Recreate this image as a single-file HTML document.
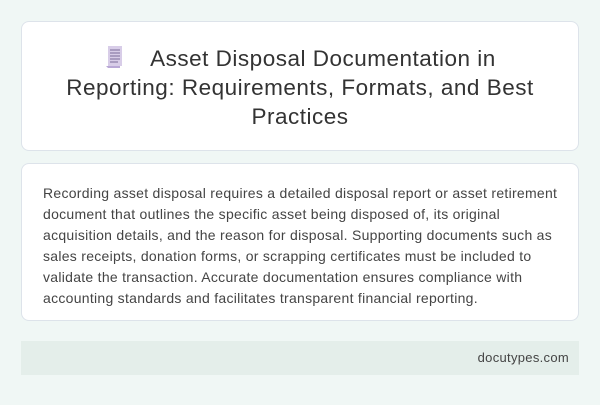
<!DOCTYPE html>
<html><head><style>
body{margin:0;width:600px;height:405px;background:#f0f7f5;font-family:"Liberation Sans",sans-serif;position:relative;overflow:hidden}
.c1{position:absolute;left:21px;top:21px;width:558px;height:130px;background:#fff;border:1px solid #dde3ea;border-radius:8px;box-sizing:border-box}
.t{position:absolute;left:30px;right:30px;top:22px;text-align:center;font-size:22.5px;line-height:29px;color:#333;letter-spacing:0.5px}
.c2{position:absolute;left:21px;top:163px;width:558px;height:158px;background:#fff;border:1px solid #dde3ea;border-radius:8px;box-sizing:border-box}
.p{position:absolute;left:21px;top:19px;font-size:14px;line-height:21px;color:#444;letter-spacing:0.28px;white-space:nowrap}
.f{position:absolute;left:21px;top:341px;width:558px;height:34px;background:#e4eeea}
.f span{position:absolute;right:10px;top:9px;font-size:13px;color:#444;letter-spacing:0.3px}
</style></head><body>
<div class="c1"><div class="t"><span style="display:inline-block;width:20px;height:24px;vertical-align:-3px;margin-right:26px;position:relative"><svg width="20" height="24" viewBox="0 0 20 24"><rect x="4" y="1" width="14" height="20" fill="#d8cde8"/><path d="M2 21h14v2H4z" fill="#b9a8d6"/><g stroke="#7a6a98" stroke-width="1"><path d="M6 5h10M6 8h10M6 11h10M6 14h10M6 17h8"/></g></svg></span>Asset Disposal Documentation in Reporting: Requirements, Formats, and Best Practices</div></div>
<div class="c2"><div class="p">Recording asset disposal requires a detailed disposal report or asset retirement<br>document that outlines the specific asset being disposed of, its original<br>acquisition details, and the reason for disposal. Supporting documents such as<br>sales receipts, donation forms, or scrapping certificates must be included to<br>validate the transaction. Accurate documentation ensures compliance with<br>accounting standards and facilitates transparent financial reporting.</div></div>
<div class="f"><span>docutypes.com</span></div>
</body></html>
